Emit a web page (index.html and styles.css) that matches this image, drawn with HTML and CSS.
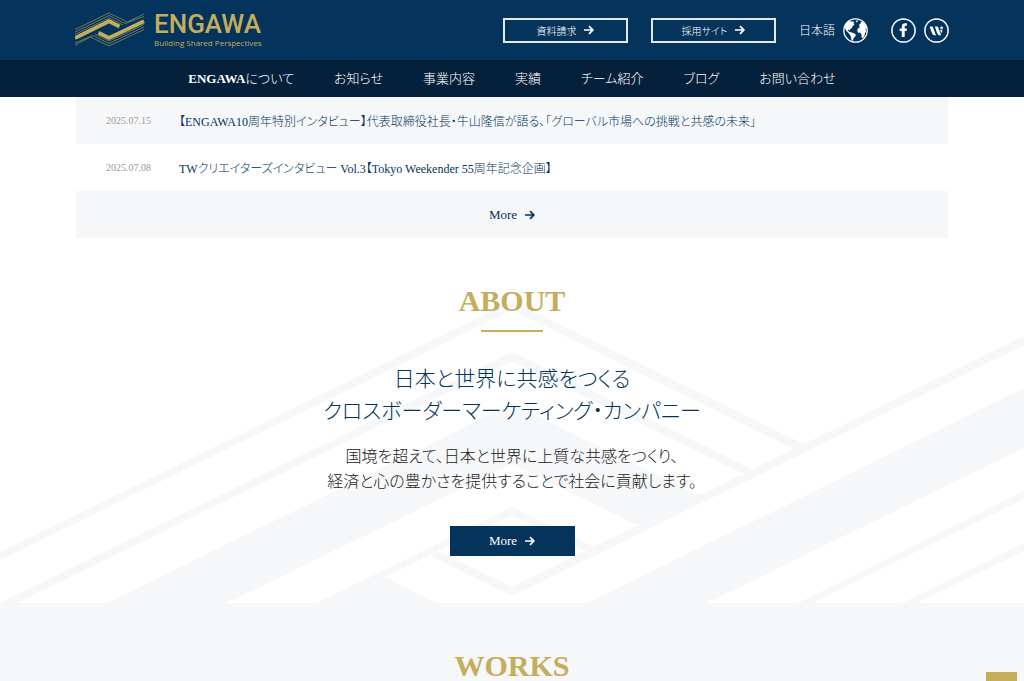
FILE: index.html
```html
<!DOCTYPE html>
<html lang="ja">
<head>
<meta charset="utf-8">
<meta name="viewport" content="width=device-width, initial-scale=1">
<title>ENGAWA</title>
<link rel="stylesheet" href="styles.css">
</head>
<body>
<svg class="sprite" aria-hidden="true">
  <symbol id="arrow" viewBox="0 0 10 10">
    <path d="M0 5H8.6M5 1.2L8.8 5L5 8.8" fill="none" stroke="currentColor" stroke-width="1.7"/>
  </symbol>
</svg>
<header class="header">
  <div class="header-top">
    <a class="logo" href="#" aria-label="ENGAWA Building Shared Perspectives">
      <svg class="logo-mark" viewBox="0 0 70 36" aria-hidden="true">
        <g fill="none" stroke="#c4ad5b">
          <path d="M0 26L34 9.2L44.5 14.5" stroke-width="3.8"/>
          <path d="M69 9.2L34 26L23.5 20.8" stroke-width="3.8"/>
          <g stroke-width="0.8" opacity="0.7">
            <path d="M0 17.5L34 1L52.5 10L69 2"/>
            <path d="M0 20L34 3.5L50 11.5L69 4.5"/>
            <path d="M0 22.5L34 6L48 13"/>
            <path d="M69 12.5L34 29L20 22"/>
            <path d="M69 15L34 31.5L18 23.5L0 31"/>
            <path d="M69 17.5L34 34L15.5 25L0 33"/>
          </g>
        </g>
      </svg>
      <span class="logo-text">
        <span class="logo-name">ENGAWA</span>
        <span class="logo-tag">Building Shared Perspectives</span>
      </span>
    </a>
    <div class="tools">
      <a class="outline-button" href="#">資料請求<svg class="arrow"><use href="#arrow"/></svg></a>
      <a class="outline-button" href="#">採用サイト<svg class="arrow"><use href="#arrow"/></svg></a>
      <a class="language" href="#">日本語
        <svg class="round-icon" viewBox="0 0 25 25" aria-hidden="true">
          <circle cx="12.5" cy="12.5" r="11.7" fill="none" stroke="#fff" stroke-width="1.3"/>
          <path fill="#fff" d="M2 7.5C3.5 4.5 6 2.5 9 3.4L11.5 4L10.5 5L11.4 6.6L9.6 8.3L8.8 10.2L7 11L7.3 12.6L5.6 11.8L4.6 12.6L6.6 14L9 14.4L12.6 16.3L12.8 18L11 19.6L10 22L9 23.4L7.9 19.6L7.5 17.4L5.2 14.8L3 12.4L1.8 9.8ZM12.8 3L15 2.2L14.6 3.7L13.2 4.2ZM16.2 6.6L18 5L17.6 3.9L19.4 3.8C21.7 5.6 23.1 8 23.6 11L22.4 11L23.2 13.6L21.8 15.6L21.5 18L19.7 20.3L18.6 19.2L18.4 16.4L17.4 14.8L15.2 14.8L14.2 12.8L14.8 10.6L16.6 9.4Z"/>
        </svg>
      </a>
      <div class="social">
        <a href="#" aria-label="Facebook">
          <svg class="round-icon" viewBox="0 0 25 25" aria-hidden="true">
            <circle cx="12.5" cy="12.5" r="11.6" fill="none" stroke="#fff" stroke-width="1.5"/>
            <path fill="#fff" d="M10.8 19V13H8.7V10.4H10.8V8.6C10.8 6.4 12.2 5.3 14.1 5.3H16V7.8H14.8C13.9 7.8 13.7 8.2 13.7 9V10.4H16L15.6 13H13.7V19Z"/>
          </svg>
        </a>
        <a href="#" aria-label="Wantedly">
          <svg class="round-icon" viewBox="0 0 25 25" aria-hidden="true">
            <circle cx="12.5" cy="12.5" r="11.6" fill="none" stroke="#fff" stroke-width="1.5"/>
            <path fill="#fff" d="M5.6 8.6H8.6L12 17.2H10.2C8.8 17.2 8.2 15.8 7.6 14.2ZM10.8 8.6H13.8L17.2 17.2H15.4C14 17.2 13.4 15.8 12.8 14.2ZM16 11.8L17.4 15.4L18.6 12Z"/>
            <circle cx="17.6" cy="9.8" r="1.4" fill="#fff"/>
          </svg>
        </a>
      </div>
    </div>
  </div>
  <nav class="nav">
    <a href="#"><strong>ENGAWA</strong>について</a>
    <a href="#">お知らせ</a>
    <a href="#">事業内容</a>
    <a href="#">実績</a>
    <a href="#">チーム紹介</a>
    <a href="#">ブログ</a>
    <a href="#">お問い合わせ</a>
  </nav>
</header>
<main>
  <section class="news">
    <a class="news-row" href="#"><time datetime="2025-07-15">2025.07.15</time><span>【ENGAWA10周年特別インタビュー】代表取締役社長・牛山隆信が語る、「グローバル市場への挑戦と共感の未来」</span></a>
    <a class="news-row" href="#"><time datetime="2025-07-08">2025.07.08</time><span>TWクリエイターズインタビュー Vol.3【Tokyo Weekender 55周年記念企画】</span></a>
    <a class="news-row news-more" href="#">More<svg class="arrow"><use href="#arrow"/></svg></a>
  </section>
  <section class="about">
    <svg class="pattern" viewBox="0 300 1024 303" aria-hidden="true">
      <g fill="#f5f7f9">
        <path d="M0 552L512 301L804 444L794 449L512 310L0 560Z"/>
        <path d="M0 603L512 352L752 469L743 474L512 361L17 603Z"/>
        <path d="M107 603L512 404L700 496L639 526L512 464L227 603Z"/>
        <path d="M317 603L512 507L594 547L586 552L512 515L385 577L437 603Z"/>
        <path d="M1024 336L512 587L437 551L429 555L512 596L1024 345Z"/>
        <path d="M1024 388L587 603H707L1024 448Z"/>
        <path d="M1024 491L798 603H812L1024 499Z"/>
        <path d="M1024 543L902 603H917L1024 551Z"/>
      </g>
    </svg>
    <h2 class="title">ABOUT</h2>
    <div class="rule"></div>
    <h3 class="lead">日本と世界に共感をつくる<br>クロスボーダーマーケティング・カンパニー</h3>
    <p class="text">国境を超えて、日本と世界に上質な共感をつくり、<br>経済と心の豊かさを提供することで社会に貢献します。</p>
    <a class="button" href="#">More<svg class="arrow"><use href="#arrow"/></svg></a>
  </section>
  <section class="works">
    <h2 class="title">WORKS</h2>
  </section>
</main>
<a class="to-top" href="#" aria-label="ページの先頭へ"></a>
</body>
</html>
```

FILE: styles.css
```css
* { box-sizing: border-box; }
body {
  margin: 0;
  background: #fff;
  color: #222;
  font-family: "Liberation Serif", "Noto Sans CJK JP", serif;
  font-weight: 300;
  font-feature-settings: "palt";
}
a { color: inherit; text-decoration: none; }
.sprite { position: absolute; width: 0; height: 0; }
.arrow { width: 10px; height: 10px; margin-left: 8px; flex: none; }

.header { color: #fff; background: #04335b; }
.header-top {
  display: flex;
  align-items: center;
  justify-content: space-between;
  height: 60px;
  padding: 0 75px;
}
.logo { display: flex; align-items: center; gap: 9px; color: #c4ad5b; }
.logo-mark { width: 70px; height: 36px; }
.logo-text { display: flex; flex-direction: column; }
.logo-name { font: 500 26px/26px Roboto, sans-serif; }
.logo-tag { font: 400 8px/12px "Open Sans", sans-serif; }
.tools { display: flex; align-items: center; gap: 23px; }
.outline-button {
  display: flex;
  align-items: center;
  justify-content: center;
  width: 125px;
  height: 25px;
  border: 2px solid #e3e9ee;
  font-size: 10px;
}
.language { display: flex; align-items: center; gap: 8px; font-size: 12px; }
.social { display: flex; gap: 8px; }
.round-icon { display: block; width: 25px; height: 25px; }
.nav {
  display: flex;
  align-items: center;
  justify-content: center;
  gap: 40px;
  height: 37px;
  background: #05203a;
  font-size: 13px;
  line-height: 20px;
}
.nav strong { font-weight: 700; }

.news { padding: 0 76px; }
.news-row {
  display: flex;
  align-items: center;
  gap: 28px;
  height: 47px;
  padding: 0 30px;
  color: #04335b;
  font-size: 12px;
}
.news-row:nth-child(odd) { background: #f5f7f9; }
.news-row time { color: #999; font-size: 10px; }
.news-row.news-more { justify-content: center; gap: 0; font-size: 13px; }

.about {
  position: relative;
  display: flex;
  flex-direction: column;
  align-items: center;
  padding: 48px 0 47px;
  text-align: center;
}
.about > * { position: relative; }
.about > .pattern { position: absolute; left: 0; bottom: 0; width: 100%; }
.title {
  margin: 0;
  color: #c4ad5b;
  font-size: 30px;
  font-weight: 700;
  line-height: 30px;
  text-align: center;
}
.rule { width: 62px; height: 2px; margin-top: 14px; background: #c4ad5b; }
.lead {
  margin: 31px 0 0;
  color: #04335b;
  font-size: 21px;
  font-weight: 300;
  line-height: 32px;
}
.text { margin: 17px 0 0; font-size: 16px; line-height: 25px; }
.button {
  display: flex;
  align-items: center;
  justify-content: center;
  width: 125px;
  height: 30px;
  margin-top: 32px;
  background: #04335b;
  color: #fff;
  font-size: 13px;
}
.works { padding-top: 48px; background: #f5f7f9; }
.to-top {
  position: fixed;
  right: 7px;
  bottom: -22px;
  width: 31px;
  height: 31px;
  background: #c4ad5b;
}
```
